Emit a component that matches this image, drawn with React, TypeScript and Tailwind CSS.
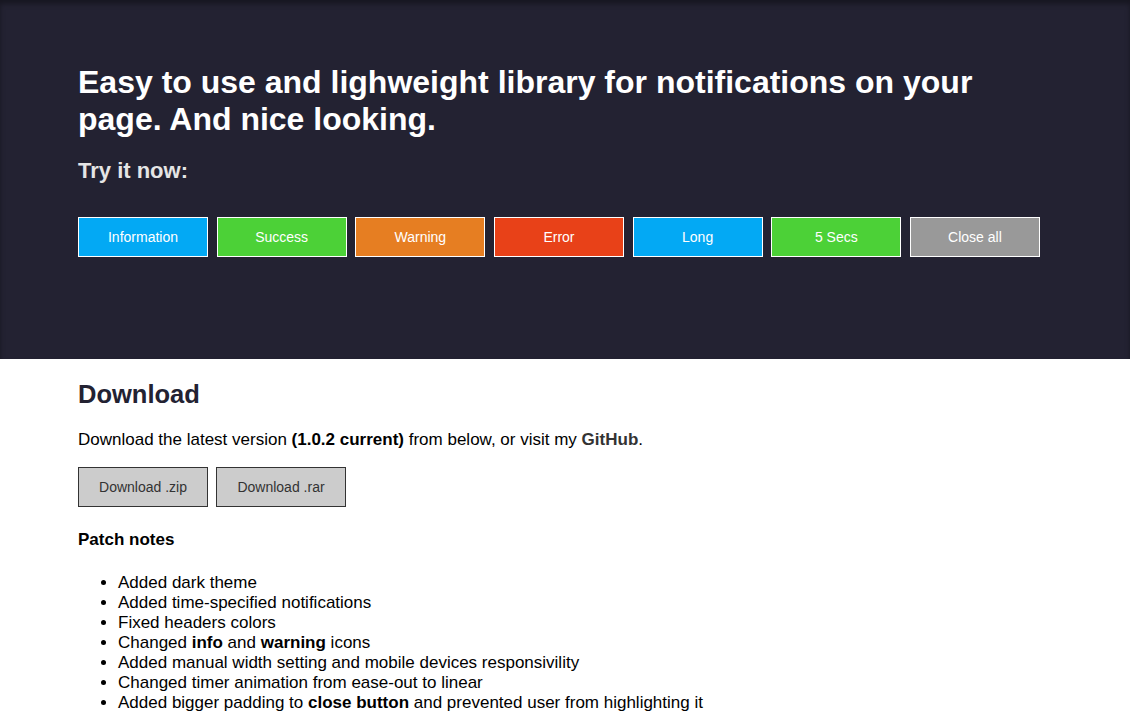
import React from 'react';

const demos = [
  { label: 'Information', cls: 'bg-[#03a9f4]' },
  { label: 'Success', cls: 'bg-[#4cd137]' },
  { label: 'Warning', cls: 'bg-[#e67e22]' },
  { label: 'Error', cls: 'bg-[#e84118]' },
  { label: 'Long', cls: 'bg-[#03a9f4]' },
  { label: '5 Secs', cls: 'bg-[#4cd137]' },
  { label: 'Close all', cls: 'bg-[#999999]' },
];

const notes: React.ReactNode[] = [
  'Added dark theme',
  'Added time-specified notifications',
  'Fixed headers colors',
  <>Changed <b>info</b> and <b>warning</b> icons</>,
  'Added manual width setting and mobile devices responsivility',
  'Changed timer animation from ease-out to linear',
  <>Added bigger padding to <b>close button</b> and prevented user from highlighting it</>,
];

function App() {
  return (
    <div className="min-h-screen bg-white font-['Liberation_Sans',Arial,sans-serif]">
      <header className="bg-[#232232] shadow-[inset_0_4px_5px_rgba(0,0,0,0.35)] px-[78px] pt-[64px] pb-[102px]">
        <h1 className="text-white font-bold text-[32px] leading-[37px] max-w-[974px]">
          Easy to use and lighweight library for notifications on your page. And nice looking.
        </h1>
        <h3 className="mt-[20px] text-[#e5e5e5] font-bold text-[22px] leading-[26px]">Try it now:</h3>
        <div className="mt-[33px] flex gap-[8.67px]">
          {demos.map((d) => (
            <button
              key={d.label}
              className={`${d.cls} w-[130px] h-[40px] border border-white text-white text-[14px] cursor-pointer`}
            >
              {d.label}
            </button>
          ))}
        </div>
      </header>

      <main className="px-[78px] pt-[20px] pb-8 text-black">
        <h2 className="text-[#232232] font-bold text-[25.5px] leading-[30px]">Download</h2>
        <p className="mt-[21px] text-[17px] leading-[20px]">
          Download the latest version <b>(1.0.2 current)</b> from below, or visit my{' '}
          <a className="font-bold text-[#333]">GitHub</a>.
        </p>
        <div className="mt-[17px] flex gap-[8px]">
          <button className="w-[130px] h-[40px] bg-[#cccccc] border border-[#333] text-[#333] text-[14px]">Download .zip</button>
          <button className="w-[130px] h-[40px] bg-[#cccccc] border border-[#333] text-[#333] text-[14px]">Download .rar</button>
        </div>
        <h4 className="mt-[23px] font-bold text-[17px] leading-[20px]">Patch notes</h4>
        <ul className="mt-[23px] list-disc pl-[40px] text-[17px] leading-[20px]">
          {notes.map((n, i) => (
            <li key={i}>{n}</li>
          ))}
        </ul>
      </main>
    </div>
  );
}

export default App;
